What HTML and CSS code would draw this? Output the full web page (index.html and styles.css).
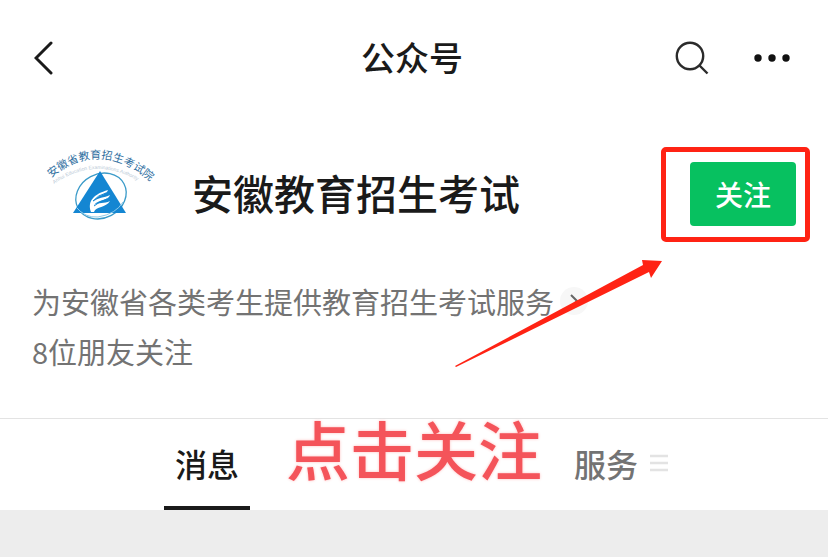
FILE: index.html
```html
<!DOCTYPE html>
<html lang="zh-CN">
<head>
    <meta charset="UTF-8">
    <meta name="viewport" content="width=device-width, initial-scale=1.0">
    <title>公众号</title>
    <link rel="stylesheet" href="styles.css">
</head>
<body>
    <header class="navbar">
        <div class="nav-side">
            <button class="icon-button" aria-label="返回">
                <svg width="20" height="34" viewBox="0 0 20 34" fill="none" stroke="#1a1a1a" stroke-width="3" stroke-linecap="round"><path d="M17 2 2 17l15 15"/></svg>
            </button>
        </div>
        <h1 class="nav-title">公众号</h1>
        <div class="nav-side nav-actions">
            <button class="icon-button" aria-label="搜索">
                <svg width="36" height="36" viewBox="0 0 36 36" fill="none" stroke="#2b2b2b" stroke-width="2.4"><circle cx="16" cy="16" r="13.2"/><path d="m25 25 8.500 8.500"/></svg>
            </button>
            <button class="icon-button" aria-label="更多">
                <svg width="36" height="8" viewBox="0 0 36 8" fill="#111"><circle cx="4" cy="4" r="3.700"/><circle cx="18" cy="4" r="3.700"/><circle cx="32" cy="4" r="3.700"/></svg>
            </button>
        </div>
    </header>

    <main>
        <section class="profile">
            <div class="account">
                <svg class="logo" width="112" height="80" viewBox="0 0 112 80" role="img" aria-label="安徽省教育招生考试院">
                    <path id="arc" d="M5 32Q52 -8 104 35" fill="none"/>
                    <path id="arc-small" d="M8 38Q53 7 100 40" fill="none"/>
                    <text class="logo-text"><textPath href="#arc">安徽省教育招生考试院</textPath></text>
                    <text class="logo-small"><textPath href="#arc-small">Anhui Education Examinations Authority</textPath></text>
                    <ellipse cx="55" cy="50" rx="26" ry="22" transform="rotate(-28 55 50)" fill="none" stroke="#3b9bc9" stroke-width="1.300"/>
                    <path d="M54 25 80 67H27Z" fill="#1486d2"/>
                    <path d="M30 61Q39 72 52 71Q70 68 77 56" fill="none" stroke="#8cc9e8" stroke-width="1"/>
                    <path d="M45 66C41 55 48 48 62 44C61 49 52 48 47 56C52 51 58 52 64 49C62 55 53 53 48 59C53 56 58 58 64 55C60 62 50 60 48 66Z" fill="#fff"/>
                    <path d="m47 55q5-6 13-8M48 60q6-5 13-7" fill="none" stroke="#1486d2" stroke-width="1"/>
                </svg>
                <h2 class="name">安徽教育招生考试</h2>
                <div class="follow">
                    <button class="follow-button">关注</button>
                    <span class="highlight"></span>
                </div>
            </div>
            <p class="info">
                <span>为安徽省各类考生提供教育招生考试服务</span>
                <button class="expand" aria-label="展开">
                    <svg width="8" height="14" viewBox="0 0 8 14" fill="none" stroke="#666" stroke-width="2"><path d="m1 1 6 6-6 6"/></svg>
                </button>
            </p>
            <p class="info">8位朋友关注</p>
            <svg class="arrow" width="208" height="108" viewBox="0 0 208 108" fill="#ff2314"><path d="M0 106 188 5 187 0 207 1 196 18 194 12 1 107Z"/></svg>
        </section>

        <nav class="tabs">
            <a class="tab active" href="#messages">消息</a>
            <a class="tab" href="#services">服务
                <svg width="18" height="18" viewBox="0 0 18 18" stroke="#e3e3e3" stroke-width="2.500"><path d="M0 2h18M0 9h18M0 16h18"/></svg>
            </a>
            <strong class="hint">点击关注</strong>
        </nav>
    </main>
</body>
</html>
```

FILE: styles.css
```css
:root {
    --text: #1a1a1a;
    --muted: #737373;
    --green: #07c160;
    --red: #ff2314;
}

* {
    box-sizing: border-box;
}

body {
    margin: 0;
    min-height: 100vh;
    background-color: #ededed;
    color: var(--text);
    font-family: "Noto Sans CJK SC", sans-serif;
}

h1, h2, p {
    margin: 0;
}

button {
    padding: 0;
    border: none;
    font-family: inherit;
    cursor: pointer;
}

.navbar {
    display: flex;
    align-items: center;
    height: 116px;
    padding: 0 38px 0 34px;
    background-color: #fff;
}

.nav-side {
    flex: 1;
    display: flex;
    align-items: center;
}

.nav-actions {
    justify-content: flex-end;
    gap: 44px;
}

.icon-button {
    display: flex;
    background: none;
}

.nav-title {
    padding-bottom: 2px;
    font-size: 34px;
    font-weight: 500;
    line-height: 48px;
}

.profile {
    position: relative;
    padding: 30px 32px 42px;
    background-color: #fff;
    border-bottom: 1px solid #e3e3e3;
}

.account {
    display: flex;
    align-items: center;
    height: 96px;
    margin-bottom: 34px;
}

.logo {
    align-self: flex-start;
    margin-left: 14px;
    overflow: visible;
}

.logo-text {
    font-size: 11px;
    fill: #2f6f9f;
}

.logo-small {
    font-family: "Liberation Sans", sans-serif;
    font-size: 5px;
    fill: #b9c9d6;
}

.name {
    padding-bottom: 4px;
    margin-left: 34px;
    font-size: 41px;
    font-weight: 500;
    line-height: 60px;
    white-space: nowrap;
}

.follow {
    position: relative;
    margin-left: auto;
}

.follow-button {
    display: block;
    width: 106px;
    height: 64px;
    border-radius: 4px;
    background-color: var(--green);
    color: #fff;
    font-size: 28px;
    font-weight: 500;
}

.highlight {
    position: absolute;
    inset: -15px -14px -16px -29px;
    border: 5px solid var(--red);
    border-radius: 5px;
    pointer-events: none;
}

.info {
    display: flex;
    align-items: center;
    gap: 6px;
    color: var(--muted);
    font-size: 29px;
    line-height: 50px;
    white-space: nowrap;
}

.expand {
    display: flex;
    align-items: center;
    justify-content: center;
    width: 28px;
    height: 28px;
    border-radius: 50%;
    background-color: #f7f7f7;
}

.arrow {
    position: absolute;
    top: 144px;
    left: 455px;
    pointer-events: none;
}

.tabs {
    position: relative;
    display: flex;
    background-color: #fff;
}

.tab {
    flex: 1;
    display: flex;
    align-items: center;
    justify-content: center;
    gap: 12px;
    height: 91px;
    padding-bottom: 4px;
    color: var(--muted);
    font-size: 32px;
    font-weight: 500;
    text-decoration: none;
}

.active {
    position: relative;
    color: var(--text);
}

.active::after {
    content: "";
    position: absolute;
    bottom: 0;
    width: 86px;
    height: 4px;
    background-color: var(--text);
}

.hint {
    position: absolute;
    top: 0;
    left: 50%;
    transform: translateX(-50%);
    color: #f4545a;
    font-size: 64px;
    font-weight: 500;
    line-height: 56px;
    white-space: nowrap;
    text-shadow: 0 0 3px #fbb;
    pointer-events: none;
}
```
